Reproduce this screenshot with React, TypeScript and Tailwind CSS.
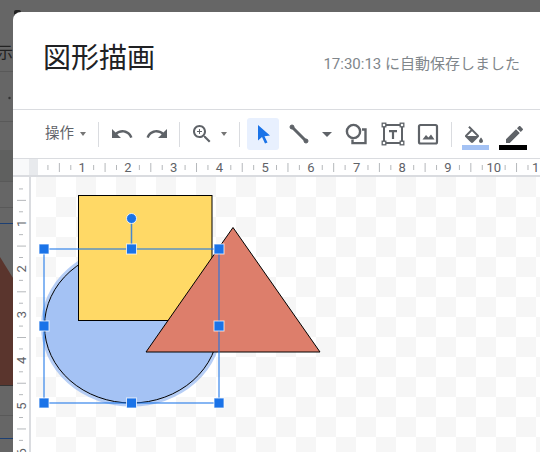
const inch = 45.72;

function Sep() {
  return <div className="h-[25px] w-px bg-[#dadce0]" />;
}

function Caret() {
  return <div className="h-0 w-0 border-x-[3px] border-t-[4px] border-x-transparent border-t-[#757575]" />;
}

function Icon({ d }: { d: string }) {
  return (
    <svg width="24" height="24" viewBox="0 0 24 24" fill="#5f6368" className="shrink-0">
      <path d={d} />
    </svg>
  );
}

function Toolbar() {
  return (
    <div className="flex h-[49px] shrink-0 items-center border-b border-[#dadce0] pl-[32px]">
      <span className="w-[29px] whitespace-nowrap text-[14.5px] leading-none text-[#5f6368]">操作</span>
      <div className="ml-[6px]"><Caret /></div>
      <div className="ml-[12px]"><Sep /></div>
      <div className="ml-[11px]">
        <Icon d="M12.5 8c-2.65 0-5.05.99-6.9 2.6L2 7v9h9l-3.62-3.62c1.39-1.16 3.16-1.88 5.12-1.88 3.54 0 6.55 2.31 7.6 5.5l2.37-.78C21.08 11.03 17.15 8 12.5 8z" />
      </div>
      <div className="ml-[11px]">
        <Icon d="M18.4 10.6C16.55 8.99 14.15 8 11.5 8c-4.65 0-8.58 3.03-9.96 7.22L3.9 16c1.05-3.19 4.05-5.5 7.6-5.5 1.95 0 3.73.72 5.12 1.88L13 16h9V7l-3.6 3.6z" />
      </div>
      <div className="ml-[10px]"><Sep /></div>
      <div className="ml-[10px]">
        <Icon d="M15.5 14h-.79l-.28-.27C15.41 12.59 16 11.11 16 9.5 16 5.91 13.09 3 9.5 3S3 5.91 3 9.5 5.91 16 9.5 16c1.61 0 3.09-.59 4.23-1.57l.27.28v.79l5 4.99L20.49 19l-4.99-5zm-6 0C7.01 14 5 11.99 5 9.5S7.01 5 9.5 5 14 7.01 14 9.5 11.99 14 9.5 14zM12 10h-2v2H9v-2H7V9h2V7h1v2h2v1z" />
      </div>
      <div className="ml-[7px]"><Caret /></div>
      <div className="ml-[12px]"><Sep /></div>
      <div className="ml-[7px] flex h-[32px] w-[32px] items-center justify-center rounded-[3px] bg-[#e8f0fe]">
        <svg width="24" height="24" viewBox="0 0 24 24" fill="#1a73e8">
          <path d="M7 3l12 10.5-5.5.7 3 6.3-2.5 1-3-6.5L7 18.5z" />
        </svg>
      </div>
      <div className="ml-[8px]">
        <svg width="24" height="24" viewBox="0 0 24 24" fill="#5f6368" stroke="#5f6368" className="shrink-0">
          <path d="M5 5l14 14" strokeWidth="3" />
          <circle cx="5" cy="5" r="2" />
          <circle cx="19" cy="19" r="2" />
        </svg>
      </div>
      <div className="ml-[11px] h-0 w-0 border-x-[5px] border-t-[5px] border-x-transparent border-t-[#5f6368]" />
      <div className="ml-[12px]">
        <svg width="24" height="24" viewBox="0 0 24 24" fill="none" stroke="#5f6368" strokeWidth="2.4">
          <circle cx="9.5" cy="9.5" r="6.6" />
          <path d="M18 7.5h3.5v13.6H8.5v-3.6" />
        </svg>
      </div>
      <div className="ml-[13px]">
        <svg width="24" height="24" viewBox="0 0 24 24" fill="none" stroke="#5f6368">
          <rect x="3" y="3" width="18" height="18" strokeWidth="2" />
          <g fill="#fff" strokeWidth="1.3">
            <rect x="1.2" y="1.2" width="3.6" height="3.6" />
            <rect x="19.2" y="1.2" width="3.6" height="3.6" />
            <rect x="1.2" y="19.2" width="3.6" height="3.6" />
            <rect x="19.2" y="19.2" width="3.6" height="3.6" />
          </g>
          <path d="M8 8h8v2.2h-2.9V17h-2.2v-6.8H8z" fill="#5f6368" stroke="none" />
        </svg>
      </div>
      <div className="ml-[11px]">
        <svg width="24" height="24" viewBox="0 0 24 24" fill="none" stroke="#5f6368">
          <rect x="3" y="3" width="18" height="18.5" rx="1.5" strokeWidth="2.2" />
          <path d="M6.5 17.5l3.5-4.5 2.5 2.5 2.5-3 3.5 5z" fill="#5f6368" stroke="none" />
        </svg>
      </div>
      <div className="ml-[11px]"><Sep /></div>
      <div className="ml-[10px] flex w-[27px] flex-col pt-[8px]">
        <svg width="24" height="19" viewBox="0 0 24 19" fill="#5f6368">
          <path d="M16.56 8.94L7.62 0 6.21 1.41l2.38 2.38-5.15 5.15c-.59.59-.59 1.54 0 2.12l5.5 5.5c.29.29.68.44 1.06.44s.77-.15 1.06-.44l5.5-5.5c.59-.58.59-1.53 0-2.12zM5.21 10L10 5.21 14.79 10H5.21zM19 11.5s-2 2.17-2 3.5c0 1.1.9 2 2 2s2-.9 2-2c0-1.33-2-3.5-2-3.5z" />
        </svg>
        <div className="h-[5px] bg-[#a4c2f4]" />
      </div>
      <div className="ml-[10px] flex w-[28px] flex-col pt-[8px]">
        <svg width="24" height="19" viewBox="0 0 24 19" fill="#5f6368" className="ml-[3px]">
          <path d="M17.75 7L14 3.25l-10 10V17h3.75l10-10zm2.96-2.96c.39-.39.39-1.02 0-1.41L18.37.29c-.39-.39-1.02-.39-1.41 0L15 2.25 18.75 6l1.96-1.96z" />
        </svg>
        <div className="h-[5px] bg-black" />
      </div>
    </div>
  );
}

function TopRuler() {
  const marks = Array.from({ length: 11 }, (_, i) => i);
  return (
    <svg width="502" height="16" viewBox="38 159 502 16" className="shrink-0">
      {marks.map((i) => {
        const x = 36.5 + i * inch;
        return (
          <g key={i} stroke="#b5b8bb">
            <line x1={x + inch / 4} x2={x + inch / 4} y1="165" y2="170" />
            <line x1={x + inch / 2} x2={x + inch / 2} y1="163" y2="172" />
            <line x1={x + (3 * inch) / 4} x2={x + (3 * inch) / 4} y1="165" y2="170" />
            <text x={x + inch} y="172" textAnchor="middle" fontSize="13" fill="#5f6368" stroke="none">
              {i + 1}
            </text>
          </g>
        );
      })}
    </svg>
  );
}

function SideRuler() {
  const marks = Array.from({ length: 6 }, (_, i) => i);
  return (
    <svg width="16" height="275" viewBox="13 177 16 275" className="shrink-0">
      {marks.map((i) => {
        const y = 177.5 + i * inch;
        const ny = y + inch;
        return (
          <g key={i} stroke="#b5b8bb">
            <line x1="19" x2="23" y1={y + inch / 4} y2={y + inch / 4} />
            <line x1="17" x2="26" y1={y + inch / 2} y2={y + inch / 2} />
            <line x1="19" x2="23" y1={y + (3 * inch) / 4} y2={y + (3 * inch) / 4} />
            <text
              x="26.5"
              y={ny}
              transform={`rotate(-90 26.5 ${ny})`}
              textAnchor="middle"
              fontSize="13"
              fill="#5f6368"
              stroke="none"
            >
              {i + 1}
            </text>
          </g>
        );
      })}
    </svg>
  );
}

const handles: [number, number][] = [
  [44, 249],
  [131.5, 249],
  [219, 249],
  [44, 326],
  [219, 326],
  [44, 403],
  [131.5, 403],
  [219, 403],
];

function Drawing() {
  return (
    <svg width="504" height="275" viewBox="36 177 504 275" className="absolute left-0 top-0">
      <ellipse cx="131.5" cy="326" rx="88.5" ry="78.5" fill="none" stroke="#a4c2f4" strokeOpacity="0.8" strokeWidth="4" />
      <ellipse cx="131.5" cy="326" rx="87" ry="77" fill="#a4c2f4" stroke="#000" />
      <rect x="78.5" y="195.5" width="133.5" height="125" fill="#ffd966" stroke="#000" />
      <path d="M233 227.5L320 352H146z" fill="#dd7e6b" stroke="#000" />
      <rect x="44" y="249" width="175" height="154" fill="none" stroke="#1a73e8" strokeOpacity="0.7" strokeWidth="1.5" />
      <line x1="131.5" x2="131.5" y1="219" y2="249" stroke="#1a73e8" strokeOpacity="0.8" strokeWidth="1.5" />
      <circle cx="131.5" cy="218.5" r="5" fill="#1a73e8" stroke="#fff" strokeOpacity="0.8" />
      {handles.map(([x, y]) => (
        <rect
          key={`${x}-${y}`}
          x={x - 5}
          y={y - 5}
          width="10"
          height="10"
          fill="#1a73e8"
          stroke="#fff"
          strokeOpacity="0.75"
        />
      ))}
    </svg>
  );
}

function Backdrop() {
  return (
    <div className="relative h-full w-[13px] shrink-0 overflow-hidden">
      <svg width="13" height="452" viewBox="0 0 13 452" className="absolute left-0 top-0">
        <rect y="150" width="13" height="32" fill="#5f605f" />
        <g stroke="#595959">
          <line x1="0" x2="13" y1="71.5" y2="71.5" />
          <line x1="0" x2="13" y1="121.5" y2="121.5" />
          <line x1="0" x2="13" y1="181.5" y2="181.5" />
          <line x1="0" x2="13" y1="207.5" y2="207.5" />
          <line x1="0" x2="13" y1="415.5" y2="415.5" />
        </g>
        <line x1="0" x2="13" y1="223.5" y2="223.5" stroke="#1c3f73" />
        <line x1="0" x2="13" y1="438.5" y2="438.5" stroke="#1c3f73" />
        <path d="M0 257L13 278V385H0z" fill="#5a352d" />
        <line x1="0" x2="13" y1="385.5" y2="385.5" stroke="#333" />
        <circle cx="9.5" cy="98" r="1.2" fill="#333" />
      </svg>
      <span className="absolute right-0 top-[45px] whitespace-nowrap text-[16px] leading-none text-[#222]">表示</span>
    </div>
  );
}

export default function App() {
  return (
    <div className="relative flex h-[452px] w-[540px] overflow-hidden bg-[#666] font-['Roboto','Noto_Sans_CJK_JP',sans-serif]">
      <div className="absolute left-[14px] top-[10px] h-[6px] w-[7px] rounded-[2px] bg-[#222]" />
      <Backdrop />
      <div className="relative mt-[12px] flex min-w-0 flex-1 flex-col overflow-hidden rounded-tl-[8px] bg-white">
        <div className="flex h-[98px] shrink-0 items-start justify-between border-b border-[#dadce0] pl-[30px] pr-[20px]">
          <h1 className="mt-[31px] text-[28px] leading-[32px] text-[#202124]">図形描画</h1>
          <span className="mt-[42px] whitespace-nowrap text-[15px] leading-[20px] text-[#80868b]">17:30:13 に自動保存しました</span>
        </div>
        <Toolbar />
        <div className="flex h-[18px] shrink-0 border-b-2 border-[#dadce0]">
          <div className="w-[16px] bg-[#f8f9fa]" />
          <div className="w-[9px] bg-[#e8eaed]" />
          <TopRuler />
        </div>
        <div className="flex min-h-0 flex-1">
          <SideRuler />
          <div className="w-[2px] bg-[#dadce0]" />
          <div className="w-[5px]" />
          <div className="relative flex-1 bg-[conic-gradient(#fff_25%,#f6f6f6_0_50%,#fff_0_75%,#f6f6f6_0)] bg-[length:40px_40px]">
            <Drawing />
          </div>
        </div>
      </div>
    </div>
  );
}
